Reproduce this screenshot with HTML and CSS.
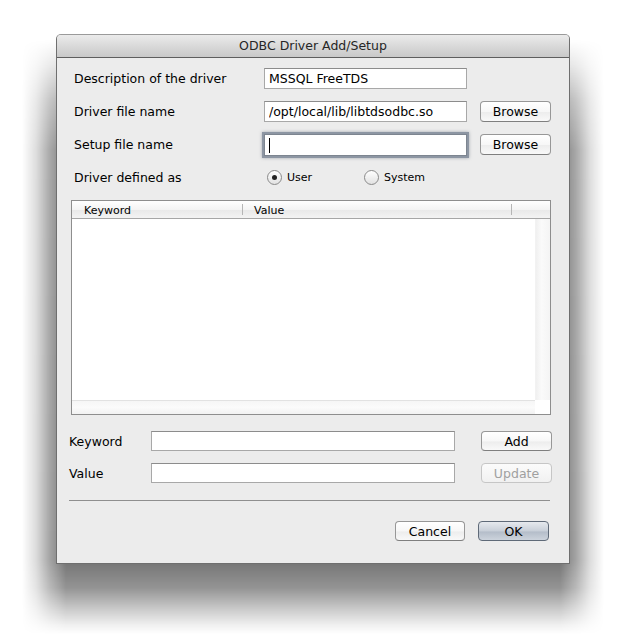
FILE: index.html
```html
<!DOCTYPE html>
<html lang="en">

<head>
    <meta charset="utf-8">
    <title>ODBC Driver Add/Setup</title>
    <link rel="stylesheet" href="styles.css">
</head>

<body>
    <div class="desktop">
        <div class="window-shadow"></div>

        <div class="window">
            <div class="titlebar">ODBC Driver Add/Setup</div>

            <div class="content">
                <div class="driver-form">
                    <label class="form-label">Description of the driver</label>
                    <input class="text-field" type="text" value="MSSQL FreeTDS">
                    <span></span>

                    <label class="form-label">Driver file name</label>
                    <input class="text-field" type="text" value="/opt/local/lib/libtdsodbc.so">
                    <button class="push-button">Browse</button>

                    <label class="form-label">Setup file name</label>
                    <div class="field-wrap focused">
                        <input class="text-field" type="text" value="">
                    </div>
                    <button class="push-button">Browse</button>

                    <label class="form-label">Driver defined as</label>
                    <div class="radio-group">
                        <span class="radio-option"><span class="radio checked"></span>User</span>
                        <span class="radio-option"><span class="radio"></span>System</span>
                    </div>
                </div>

                <div class="keyword-table">
                    <div class="table-header">
                        <span class="col col-keyword">Keyword</span>
                        <span class="col col-value">Value</span>
                        <span class="col col-rest"></span>
                    </div>
                    <div class="table-body">
                        <div class="rows"></div>
                        <div class="v-scroll"></div>
                        <div class="h-scroll"></div>
                        <div class="corner"></div>
                    </div>
                </div>

                <div class="pair-form">
                    <label class="form-label">Keyword</label>
                    <input class="text-field" type="text">
                    <button class="push-button">Add</button>

                    <label class="form-label">Value</label>
                    <input class="text-field" type="text">
                    <button class="push-button" disabled>Update</button>
                </div>

                <hr class="separator">

                <div class="dialog-buttons">
                    <button class="push-button">Cancel</button>
                    <button class="push-button default">OK</button>
                </div>
            </div>
        </div>
    </div>
</body>

</html>
```

FILE: styles.css
```css
:root {
    --window-bg: #ececec;
    --border-grey: #8e8e8e;
    --ui-font: 'DejaVu Sans', 'Liberation Sans', sans-serif;
}

* {
    box-sizing: border-box;
}

body {
    margin: 0;
    background: #fff;
    font-family: var(--ui-font);
    font-size: 12px;
    color: #000;
}

.desktop {
    position: relative;
    padding: 34px 0 0 56px;
    height: 643px;
}

/* soft shadow under the window, a blurred box made of two fades */
.window-shadow {
    position: absolute;
    left: 22px;
    top: 40px;
    width: 582px;
    height: 594px;
    background: linear-gradient(to bottom,
            rgba(0, 0, 0, 0) 0,
            rgba(0, 0, 0, 0.12) 25px,
            rgba(0, 0, 0, 0.34) 60px,
            rgba(0, 0, 0, 0.52) 110px,
            rgba(0, 0, 0, 0.55) 520px,
            rgba(0, 0, 0, 0.42) 548px,
            rgba(0, 0, 0, 0.2) 570px,
            rgba(0, 0, 0, 0.06) 585px,
            rgba(0, 0, 0, 0) 100%);
    -webkit-mask-image: linear-gradient(to right,
            transparent 0,
            rgba(0, 0, 0, 0.25) 14px,
            rgba(0, 0, 0, 0.65) 28px,
            #000 44px,
            #000 538px,
            rgba(0, 0, 0, 0.65) 554px,
            rgba(0, 0, 0, 0.25) 568px,
            transparent 100%);
    mask-image: linear-gradient(to right,
            transparent 0,
            rgba(0, 0, 0, 0.25) 14px,
            rgba(0, 0, 0, 0.65) 28px,
            #000 44px,
            #000 538px,
            rgba(0, 0, 0, 0.65) 554px,
            rgba(0, 0, 0, 0.25) 568px,
            transparent 100%);
}

.window {
    position: relative;
    width: 514px;
    height: 530px;
    background: var(--window-bg);
    border: 1px solid #6f6f6f;
    border-top-color: #9a9a9a;
    border-radius: 5px 5px 0 0;
}

.titlebar {
    height: 23px;
    line-height: 22px;
    text-align: center;
    font-size: 12.5px;
    color: #262626;
    border-bottom: 1px solid #5e5e5e;
    border-radius: 4px 4px 0 0;
    background: linear-gradient(#ebebeb, #d6d6d6 60%, #c9c9c9);
}

.content {
    padding-top: 10px;
}

/* top form */
.driver-form {
    display: grid;
    grid-template-columns: 177px 203px 71px;
    grid-auto-rows: 21px;
    column-gap: 13px;
    row-gap: 12px;
    align-items: center;
    margin-left: 17px;
}

.form-label {
    font-size: 12.5px;
}

.text-field {
    width: 100%;
    height: 21px;
    padding: 0 4px;
    margin: 0;
    border: 1px solid #a8a8a8;
    border-top-color: #8c8c8c;
    background: #fff;
    font-family: var(--ui-font);
    font-size: 12.5px;
    color: #000;
    outline: none;
}

.field-wrap {
    position: relative;
    height: 21px;
}

.field-wrap.focused .text-field {
    height: 22px;
    border-color: #7d8590;
    box-shadow: 0 0 0 2px #8d96a3, 0 0 3px 2px rgba(90, 100, 115, 0.5);
}

.field-wrap.focused::after {
    content: "";
    position: absolute;
    left: 5px;
    top: 4px;
    width: 1px;
    height: 15px;
    background: #000;
}

.push-button {
    height: 21px;
    padding: 0;
    border: 1px solid #979797;
    border-bottom-color: #7f7f7f;
    border-radius: 4px;
    background: linear-gradient(#ffffff, #f7f7f7 50%, #ededed 55%, #f9f9f9);
    font-family: var(--ui-font);
    font-size: 12.5px;
    color: #000;
}

.push-button:disabled {
    color: #a0a0a0;
    border-color: #c6c6c6;
    background: linear-gradient(#fbfbfb, #f1f1f1);
}

.push-button.default {
    border-color: #5f6a78;
    background: linear-gradient(#e6e9ee, #c8cfd8 50%, #b4bdc9 55%, #ccd3dc);
}

.radio-group {
    grid-column: 2 / 4;
    display: flex;
    padding-left: 3px;
    font-size: 11px;
}

.radio-option {
    display: flex;
    align-items: center;
    gap: 5px;
    width: 97px;
}

.radio {
    position: relative;
    width: 15px;
    height: 15px;
    border: 1px solid #8a8a8a;
    border-radius: 50%;
    background: linear-gradient(#ffffff, #f0f0f0 50%, #e2e2e2);
}

.radio.checked::after {
    content: "";
    position: absolute;
    left: 4px;
    top: 4px;
    width: 5px;
    height: 5px;
    border-radius: 50%;
    background: #222;
}

/* keyword / value table */
.keyword-table {
    width: 480px;
    height: 215px;
    margin: 12px 0 0 14px;
    border: 1px solid var(--border-grey);
    background: #fff;
    display: flex;
    flex-direction: column;
}

.table-header {
    display: flex;
    height: 18px;
    border-bottom: 1px solid #a6a6a6;
    background: linear-gradient(#ffffff, #f4f4f4 50%, #e9e9e9 55%, #f3f3f3);
    font-size: 11px;
    line-height: 19px;
}

.col {
    position: relative;
}

.col::after {
    content: "";
    position: absolute;
    right: 0;
    top: 3px;
    height: 11px;
    border-right: 1px solid #b5b5b5;
}

.col-keyword {
    width: 171px;
    padding-left: 12px;
}

.col-value {
    width: 269px;
    padding-left: 11px;
}

.col-rest {
    flex: 1;
}

.col-rest::after {
    display: none;
}

.table-body {
    flex: 1;
    display: grid;
    grid-template-columns: 1fr 15px;
    grid-template-rows: 1fr 14px;
}

.v-scroll {
    background: linear-gradient(90deg, #f0f0f0, #fafafa 40%, #f4f4f4);
    border-left: 1px solid #f2f2f2;
}

.h-scroll {
    border-top: 1px solid #e2e2e2;
    background: linear-gradient(#f6f6f6, #fbfbfb 50%, #f2f2f2);
}

.corner {
    background: #fff;
}

/* bottom fields */
.pair-form {
    display: grid;
    grid-template-columns: 56px 304px 71px;
    grid-auto-rows: 20px;
    column-gap: 26px;
    row-gap: 12px;
    align-items: center;
    margin: 16px 0 0 12px;
}

.pair-form .text-field {
    height: 20px;
}

.pair-form .push-button {
    height: 20px;
}

.separator {
    width: 481px;
    margin: 17px 0 0 12px;
    border: none;
    border-top: 1px solid #8f8f8f;
    height: 0;
}

.dialog-buttons {
    display: flex;
    justify-content: flex-end;
    gap: 13px;
    margin: 20px 20px 0 0;
}

.dialog-buttons .push-button {
    width: 70px;
    height: 20px;
}

.dialog-buttons .default {
    width: 71px;
}
```
